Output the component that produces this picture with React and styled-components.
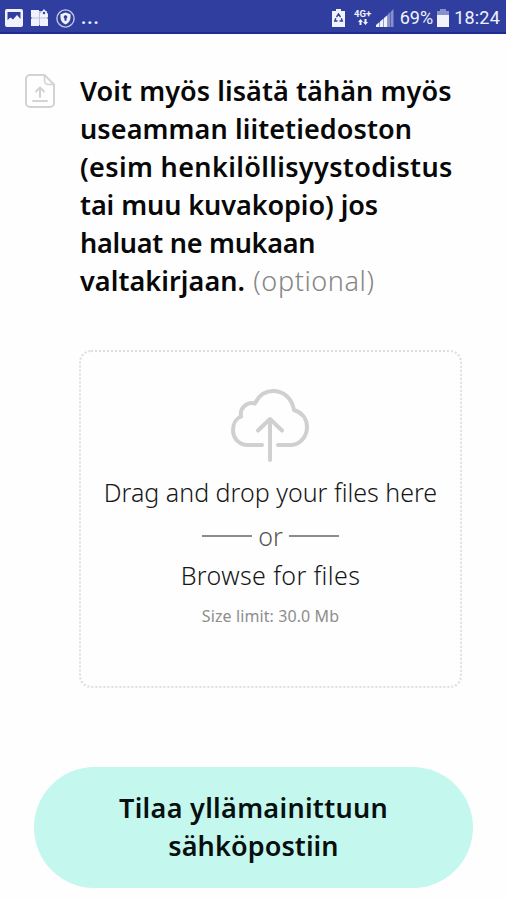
import styled, { createGlobalStyle } from 'styled-components';

const GlobalStyle = createGlobalStyle`
  * {
    box-sizing: border-box;
  }
  body {
    margin: 0;
    background: #fefefe;
    font-family: 'Noto Sans', 'Open Sans', sans-serif;
  }
`;

const Screen = styled.div`
  width: 506px;
  height: 900px;
  overflow: hidden;
`;

const StatusBar = styled.header`
  display: flex;
  justify-content: space-between;
  height: 34px;
  padding: 0 6px 0 5px;
  background: #303f9f;
  border-bottom: 2px solid #1f2a94;
  color: #f1f3fc;
`;

const StatusGroup = styled.div`
  display: flex;
  align-items: center;
  padding-top: 4px;
  font-family: Roboto, sans-serif;
  font-size: 18px;
  font-weight: 450;
  line-height: 28px;
  white-space: nowrap;
`;

const StatusIcon = styled.svg`
  flex: none;
  margin-right: ${(props) => props.$gap || 0}px;
`;

const StatusText = styled.span`
  margin-right: ${(props) => props.$gap || 0}px;
  font-weight: ${(props) => (props.$bold ? 700 : 'inherit')};
  letter-spacing: ${(props) => props.$spacing || 0}px;
`;

const Question = styled.section`
  display: flex;
  padding: 38px 0 0 25px;
`;

const QuestionIcon = styled.svg`
  flex: none;
  margin-right: 25px;
`;

const Title = styled.h1`
  margin: 0;
  font-size: 27px;
  font-weight: 600;
  line-height: 38px;
  color: #080808;
`;

const Line = styled.span`
  display: block;
  white-space: nowrap;
  letter-spacing: ${(props) => props.$spacing || 0}px;
`;

const Optional = styled.span`
  margin-left: 1px;
  font-weight: 330;
  letter-spacing: 0.6px;
  color: #858585;
`;

const DropZone = styled.section`
  display: flex;
  flex-direction: column;
  align-items: center;
  width: 383px;
  height: 338px;
  margin: 50px 0 0 79px;
  padding-top: 36px;
  border: 2px dotted #dedede;
  border-radius: 12px;
`;

const CloudIcon = styled.svg`
  margin-right: 2px;
`;

const DropText = styled.p`
  margin: ${(props) => props.$top || 0}px 0 0;
  font-size: 25px;
  line-height: 36px;
  font-weight: 350;
  color: #161616;
  white-space: nowrap;
  letter-spacing: ${(props) => props.$spacing || 0}px;
`;

const Divider = styled.div`
  display: flex;
  align-items: center;
  gap: 6px;
  margin-top: 8px;
  font-size: 25px;
  line-height: 36px;
  font-weight: 350;
  color: #555;
  &:before,
  &:after {
    content: '';
    width: 50px;
    height: 2px;
    background: #8c8c8c;
  }
`;

const SizeLimit = styled.p`
  margin: 11px 0 0;
  font-size: 16px;
  line-height: 24px;
  color: #8d8d8d;
  letter-spacing: 0.1px;
`;

const SubmitButton = styled.button`
  display: block;
  width: 439px;
  height: 121px;
  margin: 79px 0 0 34px;
  padding: 0 0 1px;
  border: none;
  border-radius: 61px;
  background: #c4f7ee;
  font-family: inherit;
  font-size: 27px;
  font-weight: 600;
  line-height: 38px;
  color: #07100e;
`;

const titleLines = [
  { text: 'Voit myös lisätä tähän myös', spacing: 0.08 },
  { text: 'useamman liitetiedoston', spacing: 0.1 },
  { text: '(esim henkilöllisyystodistus', spacing: 0.36 },
  { text: 'tai muu kuvakopio) jos', spacing: -0.07 },
  { text: 'haluat ne mukaan', spacing: -0.27 },
];

const PictureIcon = () => (
  <StatusIcon $gap={8} width="18" height="18" viewBox="0 0 18 18">
    <path
      fill="#f1f3fc"
      fillRule="evenodd"
      d="M2 0h14a2 2 0 0 1 2 2v14a2 2 0 0 1-2 2H2a2 2 0 0 1-2-2V2a2 2 0 0 1 2-2zM2.500 3v8l3-2.500 2.500 2 4-4.500 3.500 4V3z"
    />
  </StatusIcon>
);

const GiftIcon = () => (
  <StatusIcon $gap={7} width="18" height="18" viewBox="0 0 18 18">
    <path fill="#b9c0e6" d="M1 2h15v14H1z" />
    <path fill="#f1f3fc" d="M0 1h8v7.500H0zM0 9.500h8V17H0zM9 9.500h8V17H9zM9 5l4-5 4 5v3.500H9z" />
    <circle cx="13" cy="4" r="1.200" fill="#303f9f" />
  </StatusIcon>
);

const ShieldIcon = () => (
  <StatusIcon $gap={6} width="19" height="19" viewBox="0 0 19 19">
    <circle cx="9.500" cy="9.500" r="8.600" fill="none" stroke="#c7cdee" strokeWidth="1.300" />
    <path fill="#f1f3fc" d="M9.500 3.500l5 1.700v3.500c0 3-2 5.300-5 6.800-3-1.500-5-3.800-5-6.800V5.200z" />
    <path fill="#303f9f" d="M9.500 6.200a1.800 1.800 0 0 1 1 3.300v2.200h-2V9.500a1.800 1.800 0 0 1 1-3.300z" />
  </StatusIcon>
);

const RecycleBatteryIcon = () => (
  <StatusIcon $gap={8} width="13" height="18" viewBox="0 0 13 18">
    <path fill="#f1f3fc" d="M4 0h5v2h4v16H0V2h4z" />
    <path
      fill="none"
      stroke="#303f9f"
      strokeWidth="1.400"
      d="M4.500 8l2-3 2 3M9.300 9.300l1 2.700H7.500M5.500 12H2.800l1-2.700"
    />
  </StatusIcon>
);

const NetworkIcon = () => (
  <StatusIcon $gap={3} width="20" height="20" viewBox="0 0 20 20">
    <text x="1" y="9" fill="#f1f3fc" fontFamily="Roboto, sans-serif" fontSize="9.500" fontWeight="700">
      4G+
    </text>
    <path fill="#f1f3fc" d="M7.500 11l2.500 3H8.500v3h-2v-3H5zM12.500 17L10 14h1.500v-3h2v3H15z" />
  </StatusIcon>
);

const SignalIcon = () => (
  <StatusIcon $gap={6} width="18" height="18" viewBox="0 0 18 18">
    <path fill="#f1f3fc" d="M0 18v-2l3.500-3v5zM4 18v-5.500l3.500-3V18zM8 18V9l3.500-3v12z" />
    <path fill="#8790cc" d="M12 18V5l2.500-2v15zM15 18V2.500L17.500 0v18z" />
  </StatusIcon>
);

const BatteryIcon = () => (
  <StatusIcon $gap={5} width="12" height="18" viewBox="0 0 12 18">
    <path fill="#8790cc" d="M3 0h6v2h3v5H0V2h3z" />
    <path fill="#f1f3fc" d="M0 6h12v12H0z" />
  </StatusIcon>
);

const FileUploadIcon = () => (
  <QuestionIcon
    width="30"
    height="36"
    viewBox="0 0 30 36"
    fill="none"
    stroke="#d3d3d3"
    strokeWidth="2"
    strokeLinecap="round"
    strokeLinejoin="round"
  >
    <path d="M19.500 3H5a4 4 0 0 0-4 4v24a4 4 0 0 0 4 4h20a4 4 0 0 0 4-4V12.500z" />
    <path d="M19.500 3v5.500a4 4 0 0 0 4 4H29" strokeWidth="1.600" />
    <path d="M15 25V15.500M11 19.500l4-4 4 4M8 29h14" />
  </QuestionIcon>
);

const CloudUploadIcon = () => (
  <CloudIcon
    width="80"
    height="74"
    viewBox="0 0 80 74"
    fill="none"
    stroke="#d0d0d0"
    strokeWidth="4"
    strokeLinecap="round"
    strokeLinejoin="round"
  >
    <path d="M32 57H16C7.500 56 3 49 3 42c0-6 3-11.500 8-13.500C9.500 20 17 13.500 25 15.500 29 7 36 3 43 3c11 0 19 7.500 21 19 8 2.500 13 9 13 17 0 10-7 17-15 18H48" />
    <path d="M40 72V31M28 42.500L40 31l12 11.500" />
  </CloudIcon>
);

export default function App() {
  return (
    <Screen>
      <GlobalStyle />
      <StatusBar>
        <StatusGroup>
          <PictureIcon />
          <GiftIcon />
          <ShieldIcon />
          <StatusText $bold $spacing={1}>
            ...
          </StatusText>
        </StatusGroup>
        <StatusGroup>
          <RecycleBatteryIcon />
          <NetworkIcon />
          <SignalIcon />
          <StatusText $gap={4}>69%</StatusText>
          <BatteryIcon />
          <StatusText $spacing={0.2}>18:24</StatusText>
        </StatusGroup>
      </StatusBar>

      <Question>
        <FileUploadIcon />
        <Title>
          {titleLines.map((line) => (
            <Line key={line.text} $spacing={line.spacing}>
              {line.text}
            </Line>
          ))}
          <Line $spacing={0.08}>
            valtakirjaan. <Optional>(optional)</Optional>
          </Line>
        </Title>
      </Question>

      <DropZone>
        <CloudUploadIcon />
        <DropText $top={12}>Drag and drop your files here</DropText>
        <Divider>or</Divider>
        <DropText $top={3} $spacing={0.38}>
          Browse for files
        </DropText>
        <SizeLimit>Size limit: 30.0 Mb</SizeLimit>
      </DropZone>

      <SubmitButton>
        <Line $spacing={0.3}>Tilaa yllämainittuun</Line>
        <Line $spacing={0.1}>sähköpostiin</Line>
      </SubmitButton>
    </Screen>
  );
}
